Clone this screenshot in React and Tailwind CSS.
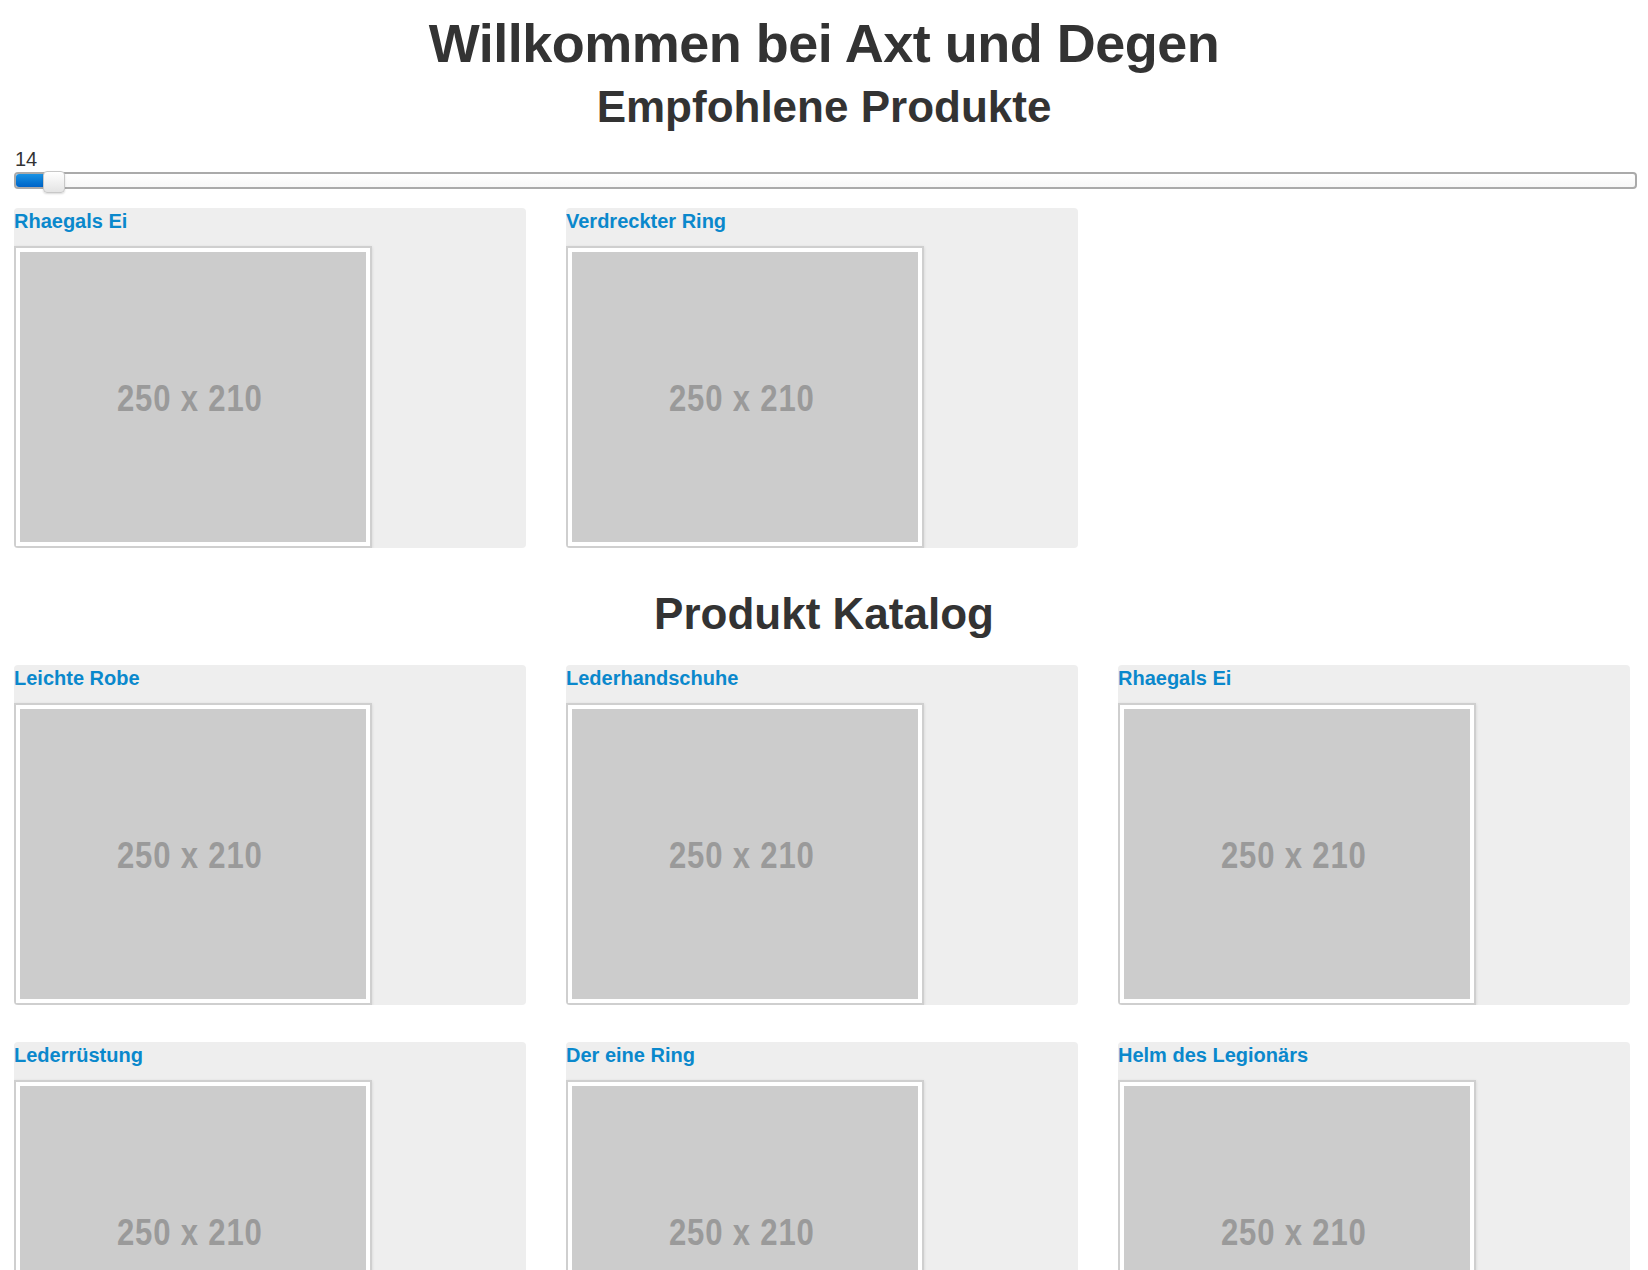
import React from 'react';

const featured = ['Rhaegals Ei', 'Verdreckter Ring'];

const catalog = [
  'Leichte Robe',
  'Lederhandschuhe',
  'Rhaegals Ei',
  'Lederrüstung',
  'Der eine Ring',
  'Helm des Legionärs',
];

const ProductCard = ({ name }) => (
  <div className="bg-[#eeeeee] rounded-[4px] pt-[2px] h-[340px] overflow-hidden">
    <h5 className="text-[20px] leading-[22px] font-bold text-[#0a88cc]">{name}</h5>
    {/* thumbnail frame */}
    <div className="mt-[14px] w-[358px] bg-white border-2 border-[#cfcfcf] p-[4px] shadow-[0_1px_3px_rgba(0,0,0,0.12)]">
      <div className="w-[346px] h-[290px] bg-[#cccccc] flex items-center justify-center pt-[4px] pr-[6px]">
        <span className="text-[37px] font-bold tracking-[1px] text-[#9a9a9a] scale-x-[0.84] font-['Liberation_Sans',Arial,sans-serif]">
          250 x 210
        </span>
      </div>
    </div>
  </div>
);

const Slider = ({ value }) => (
  <div className="ml-[14px] mr-[11px]">
    <div className="text-[20px] leading-[20px] text-[#333] pl-[1px]">{value}</div>
    <div className="relative mt-[3px] h-[17px] rounded-[4px] border-2 border-[#aaaaaa] bg-gradient-to-b from-white to-[#f7f7f7]">
      <div className="h-full w-[30px] rounded-l-[3px] bg-gradient-to-b from-[#1a93e4] to-[#0063c7]" />
      {/* handle */}
      <div className="absolute left-[27px] top-[-3px] w-[22px] h-[22px] rounded-[4px] border border-[#c8c8c8] bg-gradient-to-b from-white to-[#e4e4e4] shadow-[0_1px_2px_rgba(0,0,0,0.15)]" />
    </div>
  </div>
);

export default function App() {
  return (
    <div className="min-h-screen bg-white font-['Liberation_Sans',Arial,sans-serif] text-[#333] pb-10">
      <h1 className="pt-[13px] text-center text-[54px] leading-[60px] font-bold tracking-[-0.5px]">
        Willkommen bei Axt und Degen
      </h1>
      <h2 className="mt-[10px] text-center text-[44px] leading-[48px] font-bold">Empfohlene Produkte</h2>

      <div className="mt-[18px]">
        <Slider value={14} />
      </div>

      <div className="mt-[19px] pl-[14px] pr-[18px] grid grid-cols-3 gap-x-[40px]">
        {featured.map((name) => (
          <ProductCard key={name} name={name} />
        ))}
      </div>

      <h2 className="mt-[42px] text-center text-[44px] leading-[48px] font-bold">Produkt Katalog</h2>

      <div className="mt-[27px] pl-[14px] pr-[18px] grid grid-cols-3 gap-x-[40px] gap-y-[37px]">
        {catalog.map((name, i) => (
          <ProductCard key={i} name={name} />
        ))}
      </div>
    </div>
  );
}
